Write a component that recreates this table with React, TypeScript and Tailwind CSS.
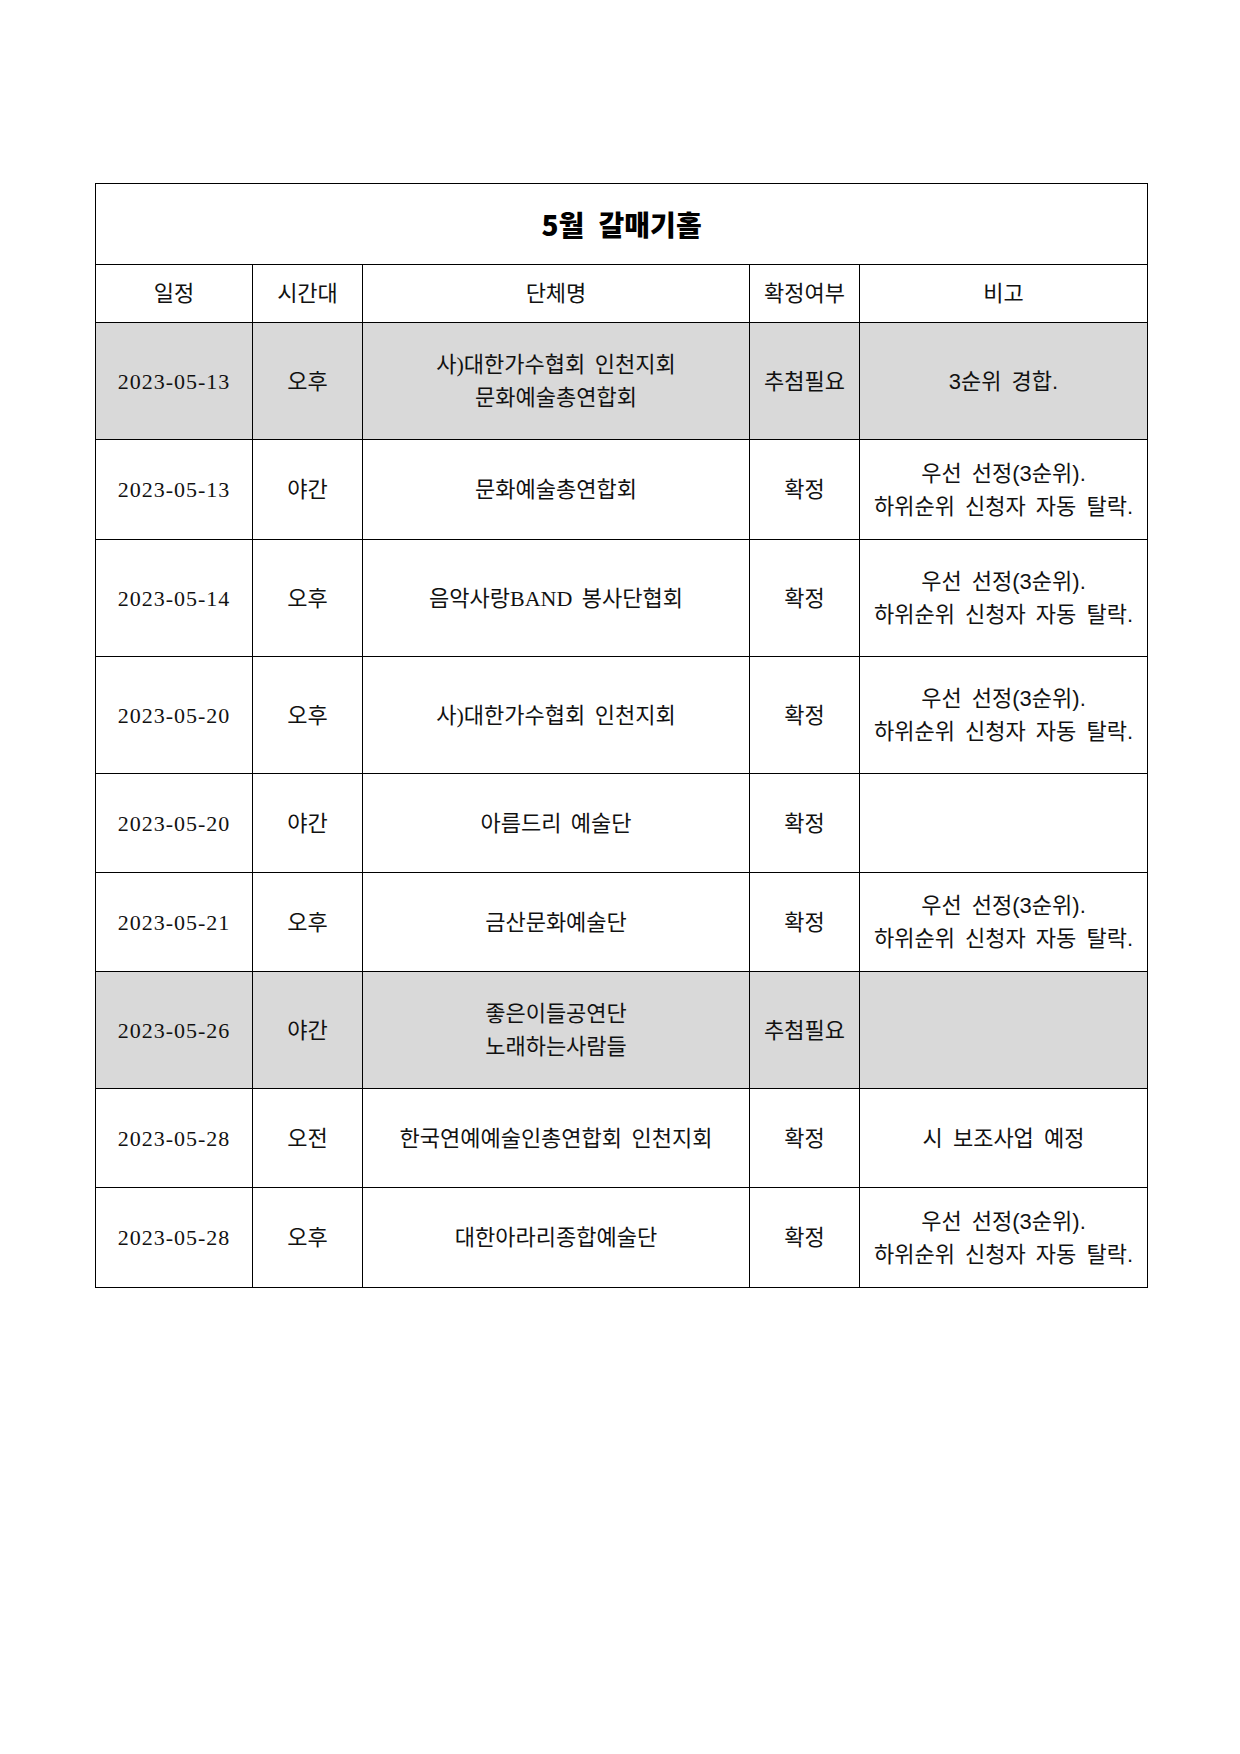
const serif = "font-['Liberation_Serif','Noto_Sans_CJK_KR',sans-serif]";
const sans = "font-['Liberation_Sans','Noto_Sans_CJK_KR',sans-serif]";

type Row = {
  date: string;
  time: string;
  name: string[];
  status: string;
  note: string[];
  gray?: boolean;
  h: string;
};

const LONG_NOTE = ["우선 선정(3순위).", "하위순위 신청자 자동 탈락."];

const rows: Row[] = [
  { date: "2023-05-13", time: "오후", name: ["사)대한가수협회 인천지회", "문화예술총연합회"], status: "추첨필요", note: ["3순위 경합."], gray: true, h: "h-[117px]" },
  { date: "2023-05-13", time: "야간", name: ["문화예술총연합회"], status: "확정", note: LONG_NOTE, h: "h-[100px]" },
  { date: "2023-05-14", time: "오후", name: ["음악사랑BAND 봉사단협회"], status: "확정", note: LONG_NOTE, h: "h-[117px]" },
  { date: "2023-05-20", time: "오후", name: ["사)대한가수협회 인천지회"], status: "확정", note: LONG_NOTE, h: "h-[117px]" },
  { date: "2023-05-20", time: "야간", name: ["아름드리 예술단"], status: "확정", note: [], h: "h-[99px]" },
  { date: "2023-05-21", time: "오후", name: ["금산문화예술단"], status: "확정", note: LONG_NOTE, h: "h-[99px]" },
  { date: "2023-05-26", time: "야간", name: ["좋은이들공연단", "노래하는사람들"], status: "추첨필요", note: [], gray: true, h: "h-[117px]" },
  { date: "2023-05-28", time: "오전", name: ["한국연예예술인총연합회 인천지회"], status: "확정", note: ["시 보조사업 예정"], h: "h-[99px]" },
  { date: "2023-05-28", time: "오후", name: ["대한아라리종합예술단"], status: "확정", note: LONG_NOTE, h: "h-[100px]" },
];

function Lines({ lines }: { lines: string[] }) {
  return (
    <>
      {lines.map((l) => (
        <div key={l}>{l}</div>
      ))}
    </>
  );
}

export default function App() {
  const cell = "border border-black text-center align-middle p-0";
  return (
    <div className="min-h-[1754px] w-[1240px] bg-white pt-[183px] pl-[95px] text-[22px] leading-[33px] text-[#111] [word-spacing:4px]">
      <table className="w-[1052px] table-fixed border-collapse">
        <colgroup>
          <col className="w-[157px]" />
          <col className="w-[110px]" />
          <col className="w-[387px]" />
          <col className="w-[110px]" />
          <col className="w-[288px]" />
        </colgroup>
        <tbody>
          <tr className="h-[81px]">
            <td colSpan={5} className={`${cell} font-['Noto_Sans_CJK_KR',sans-serif] text-[28px] font-black text-black [word-spacing:8px]`}>
              5월 갈매기홀
            </td>
          </tr>
          <tr className={`h-[58px] ${sans}`}>
            <td className={cell}>일정</td>
            <td className={cell}>시간대</td>
            <td className={cell}>단체명</td>
            <td className={cell}>확정여부</td>
            <td className={cell}>비고</td>
          </tr>
          {rows.map((r, i) => (
            <tr key={i} className={`${r.h} ${r.gray ? "bg-[#d9d9d9]" : ""}`}>
              <td className={`${cell} ${serif} tracking-[1px]`}>{r.date}</td>
              <td className={`${cell} ${sans}`}>{r.time}</td>
              <td className={`${cell} ${serif}`}>
                <Lines lines={r.name} />
              </td>
              <td className={`${cell} ${sans}`}>{r.status}</td>
              <td className={`${cell} ${sans}`}>
                <Lines lines={r.note} />
              </td>
            </tr>
          ))}
        </tbody>
      </table>
    </div>
  );
}
